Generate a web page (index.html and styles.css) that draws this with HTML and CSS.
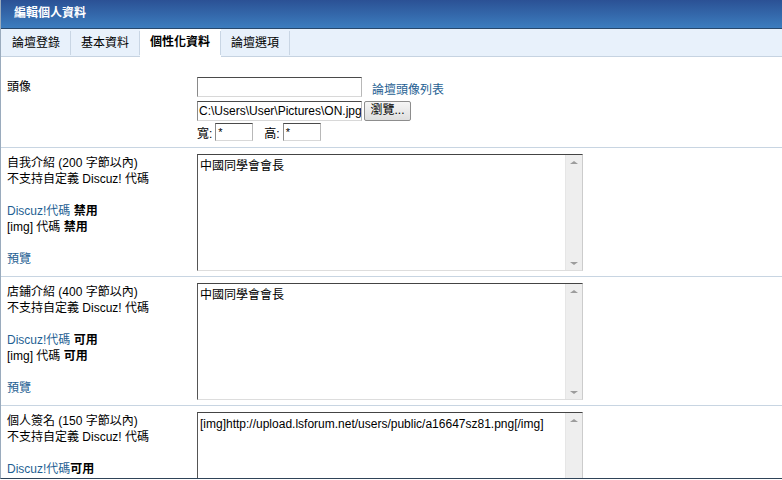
FILE: index.html
```html
<!DOCTYPE html>
<html lang="zh-TW">
<head>
  <meta charset="UTF-8">
  <title>編輯個人資料</title>
  <link rel="stylesheet" href="styles.css">
</head>
<body>
  <div class="panel">
    <div class="title">編輯個人資料</div>
    <div class="tabs">
      <a class="tab">論壇登錄</a>
      <a class="tab">基本資料</a>
      <a class="tab active">個性化資料</a>
      <a class="tab">論壇選項</a>
    </div>

    <div class="row avatar">
      <div class="label">頭像</div>
      <div class="field">
        <div class="line">
          <span class="input wide"></span>
          <a class="link avatar-link">論壇頭像列表</a>
        </div>
        <div class="line file">
          <span class="input wide path">C:\Users\User\Pictures\ON.jpg</span>
          <span class="browse">瀏覽...</span>
        </div>
        <div class="line size">
          <span>寬:</span><span class="input small">*</span>
          <span class="gap">高:</span><span class="input small">*</span>
        </div>
      </div>
    </div>

    <div class="row">
      <div class="label">
        <div>自我介紹 (200 字節以內)</div>
        <div>不支持自定義 Discuz! 代碼</div>
        <div class="blank"></div>
        <div><a class="link">Discuz!代碼</a> <b>禁用</b></div>
        <div>[img] 代碼 <b>禁用</b></div>
        <div class="blank"></div>
        <div><a class="link">預覽</a></div>
      </div>
      <div class="field">
        <div class="textbox">
          <div class="text">中國同學會會長</div>
          <div class="scroll"><span class="up"></span><span class="down"></span></div>
        </div>
      </div>
    </div>

    <div class="row">
      <div class="label">
        <div>店鋪介紹 (400 字節以內)</div>
        <div>不支持自定義 Discuz! 代碼</div>
        <div class="blank"></div>
        <div><a class="link">Discuz!代碼</a> <b>可用</b></div>
        <div>[img] 代碼 <b>可用</b></div>
        <div class="blank"></div>
        <div><a class="link">預覽</a></div>
      </div>
      <div class="field">
        <div class="textbox">
          <div class="text">中國同學會會長</div>
          <div class="scroll"><span class="up"></span><span class="down"></span></div>
        </div>
      </div>
    </div>

    <div class="row last">
      <div class="label">
        <div>個人簽名 (150 字節以內)</div>
        <div>不支持自定義 Discuz! 代碼</div>
        <div class="blank"></div>
        <div><a class="link">Discuz!代碼</a><b>可用</b></div>
      </div>
      <div class="field">
        <div class="textbox">
          <div class="text">[img]http://upload.lsforum.net/users/public/a16647sz81.png[/img]</div>
          <div class="scroll"><span class="up"></span></div>
        </div>
      </div>
    </div>
  </div>
</body>
</html>
```

FILE: styles.css
```css
body { margin: 0; background: #fff; color: #000; font-family: "Liberation Sans", Arial, "Noto Sans CJK TC", sans-serif; font-size: 12px; }
.panel { height: 479px; overflow: hidden; border-left: 1px solid #9aabbd; border-bottom: 1px solid #2f4358; box-sizing: border-box; }
.title { height: 28px; line-height: 27px; padding-left: 13px; color: #fff; font-weight: bold; font-size: 12px; background: linear-gradient(#2b5195, #3c7dbf); border-bottom: 1px solid #27486c; }
.tabs { display: flex; height: 27px; background: #e8f1fb; border-bottom: 1px solid #c6d3e1; }
.tab { padding: 0 10px; border-right: 1px solid #c9d6e4; margin: 2px 0 1px; line-height: 24px; }
.tab:first-child { padding-left: 11px; }
.tab.active { background: #fff; font-weight: bold; margin: 0 -1px -1px 0; line-height: 27px; border-right: none; padding: 0 11px 0 10px; min-width: 60px; }
.tab.active + .tab { border-left: 1px solid #c9d6e4; }

.row { display: flex; border-bottom: 1px solid #c8d5e2; padding: 6px 0 5px; }
.row.last { border-bottom: none; }
.label { width: 190px; padding-left: 6px; padding-top: 1px; line-height: 16px; }
.label b { font-weight: bold; }
.blank { height: 16px; }
.field { flex: 1; }
.link { color: #1f5f93; text-decoration: none; }

.avatar { padding: 20px 0 6px; }
.avatar .label { padding-top: 2px; }
.line { display: flex; align-items: center; }
.line.file { margin-top: 4px; }
.line.size { margin-top: 2px; }
.input { display: inline-block; box-sizing: border-box; height: 20px; border: 1px solid; border-color: #4a4a4a #b8b8b8 #d8d8d8 #8a8a8a; background: #fff; line-height: 18px; padding-left: 2px; overflow: hidden; white-space: nowrap; }
.input.wide { width: 165px; }
.input.path { font-size: 12px; padding-left: 1px; }
.input.small { width: 38px; height: 18px; line-height: 16px; margin-left: 3px; font-size: 11px; }
.gap { margin-left: 11px; }
.avatar-link { margin-left: 10px; padding-top: 3px; }
.browse { margin-left: 2px; height: 20px; width: 47px; box-sizing: border-box; border: 1px solid #8d8d8d; background: linear-gradient(#f6f6f6, #dedede); text-align: center; line-height: 16px; border-radius: 2px; }

.textbox { display: flex; width: 386px; height: 117px; box-sizing: border-box; border: 1px solid; border-color: #444 #ccc #ddd #555; }
.text { flex: 1; padding: 3px 2px; line-height: 16px; font-size: 12px; }
.scroll { width: 17px; background: #eeeeee; border-left: 1px solid #e6e6e6; display: flex; flex-direction: column; justify-content: space-between; align-items: center; padding: 6px 0 5px; box-sizing: border-box; }
.up { width: 0; height: 0; border-left: 4px solid transparent; border-right: 4px solid transparent; border-bottom: 3px solid #9c9c9c; }
.down { width: 0; height: 0; border-left: 4px solid transparent; border-right: 4px solid transparent; border-top: 3px solid #9c9c9c; }
```
